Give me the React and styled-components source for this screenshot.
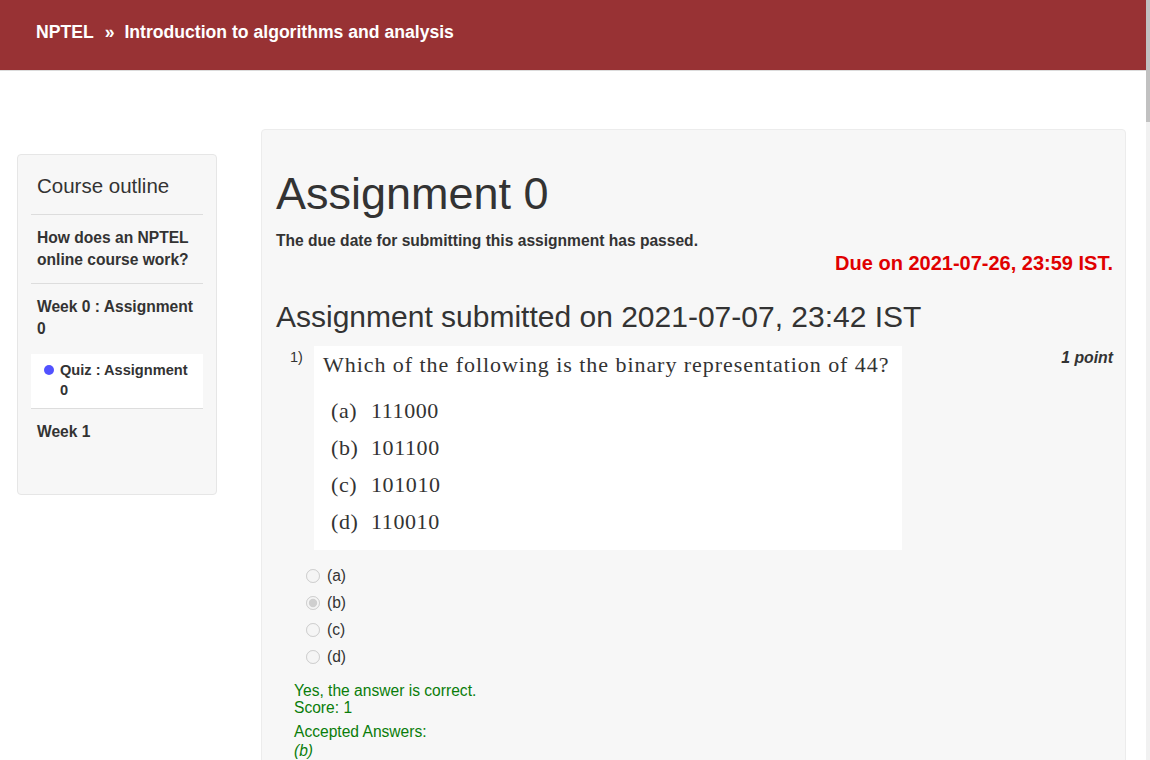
import React from "react";
import styled, { createGlobalStyle } from "styled-components";

const GlobalStyle = createGlobalStyle`
  body {
    margin: 0;
    font-family: "Liberation Sans", Arial, sans-serif;
    color: #333;
    background: #fff;
  }
`;

const outline = [
  { label: "How does an NPTEL online course work?" },
  { label: "Week 0 : Assignment 0", children: ["Quiz : Assignment 0"] },
  { label: "Week 1" },
];

const choices = ["(a)", "(b)", "(c)", "(d)"];
const imageOptions = [
  ["(a)", "111000"],
  ["(b)", "101100"],
  ["(c)", "101010"],
  ["(d)", "110010"],
];

const App = () => {
  return (
    <Page>
      <GlobalStyle />
      <ScrollTrack>
        <ScrollThumb />
      </ScrollTrack>
      <Header>
        <Crumb>NPTEL</Crumb>
        <Sep>»</Sep>
        <Crumb>Introduction to algorithms and analysis</Crumb>
      </Header>

      <Body>
        <Sidebar>
          <SideTitle>Course outline</SideTitle>
          {outline.map((unit) => (
            <Unit key={unit.label}>
              <UnitLabel>{unit.label}</UnitLabel>
              {unit.children &&
                unit.children.map((c) => (
                  <SubItem key={c}>
                    <Dot />
                    <span>{c}</span>
                  </SubItem>
                ))}
            </Unit>
          ))}
        </Sidebar>

        <Main>
          <Title>Assignment 0</Title>
          <Passed>The due date for submitting this assignment has passed.</Passed>
          <Due>Due on 2021-07-26, 23:59 IST.</Due>
          <Submitted>Assignment submitted on 2021-07-07, 23:42 IST</Submitted>

          <Question>
            <QNum>1)</QNum>
            <QImage>
              <QText>Which of the following is the binary representation of 44?</QText>
              <OptList>
                {imageOptions.map(([k, v]) => (
                  <Opt key={k}>
                    <OptKey>{k}</OptKey>
                    {v}
                  </Opt>
                ))}
              </OptList>
            </QImage>
            <Points>1 point</Points>
          </Question>

          <Choices>
            {choices.map((c) => (
              <Choice key={c}>
                <Radio type="radio" name="q1" disabled defaultChecked={c === "(b)"} />
                {c}
              </Choice>
            ))}
          </Choices>

          <Feedback>
            <div>Yes, the answer is correct.</div>
            <div>Score: 1</div>
            <Accepted>Accepted Answers:</Accepted>
            <em>(b)</em>
          </Feedback>
        </Main>
      </Body>
    </Page>
  );
};

const Page = styled.div`
  margin-right: 4px;
  height: 760px;
  overflow: hidden;
`;

const ScrollTrack = styled.div`
  position: fixed;
  top: 0;
  right: 0;
  width: 4px;
  height: 100vh;
  background: #f1f1f1;
`;

const ScrollThumb = styled.div`
  height: 122px;
  background: #c1c1c1;
`;

const Header = styled.header`
  height: 71px;
  background: #983234;
  border-bottom: 1px solid #dcdcdc;
  display: flex;
  align-items: center;
  padding: 0 36px 6px 36px;
  box-sizing: border-box;
  color: #fff;
  font-weight: bold;
  font-size: 17.6px;
`;

const Crumb = styled.span``;

const Sep = styled.span`
  margin: 0 10px 0 11px;
`;

const Body = styled.div`
  display: flex;
  align-items: flex-start;
  padding: 58px 20px 0 17px;
  gap: 44px;
`;

const Sidebar = styled.aside`
  width: 200px;
  flex: none;
  box-sizing: border-box;
  margin-top: 25px;
  padding: 19px 13px 30px 13px;
  background: #f7f7f7;
  border: 1px solid #e6e6e6;
  border-radius: 4px;
  min-height: 341px;
`;

const SideTitle = styled.div`
  font-size: 20.5px;
  line-height: 24px;
  padding: 0 6px 16px 6px;
  border-bottom: 1px solid #dddddd;
`;

const Unit = styled.div`
  padding-top: 12px;
  border-bottom: 1px solid #dddddd;
  &:last-child {
    border-bottom: none;
  }
`;

const UnitLabel = styled.div`
  font-size: 15.6px;
  font-weight: bold;
  line-height: 22px;
  padding: 0 6px 12px 6px;
`;

const SubItem = styled.div`
  display: flex;
  align-items: flex-start;
  background: #fff;
  font-size: 14.6px;
  font-weight: bold;
  line-height: 20px;
  padding: 6px 8px 8px 13px;
  margin-top: 2px;
`;

const Dot = styled.span`
  flex: none;
  width: 10px;
  height: 10px;
  border-radius: 50%;
  background: #5252ff;
  margin: 5px 6px 0 0;
`;

const Main = styled.main`
  flex: 1;
  height: 900px;
  background: #f7f7f7;
  border: 1px solid #ececec;
  border-radius: 4px;
  padding: 38px 12px 0 14px;
`;

const Title = styled.h1`
  margin: 0;
  font-size: 45px;
  font-weight: normal;
  line-height: 52px;
`;

const Passed = styled.div`
  font-size: 15.6px;
  font-weight: bold;
  line-height: 18px;
  margin-top: 12px;
`;

const Due = styled.div`
  text-align: right;
  color: #e00000;
  font-weight: bold;
  font-size: 20px;
  line-height: 23px;
  margin-top: 2px;
`;

const Submitted = styled.h2`
  margin: 24px 0 0 0;
  font-size: 30px;
  font-weight: normal;
  line-height: 36px;
`;

const Question = styled.div`
  display: flex;
  align-items: flex-start;
  margin-top: 11px;
`;

const QNum = styled.span`
  font-size: 14.5px;
  width: 38px;
  box-sizing: border-box;
  padding: 3px 0 0 14px;
`;

const QImage = styled.div`
  background: #fff;
  width: 588px;
  flex: none;
  box-sizing: border-box;
  padding: 4px 10px 10px 9px;
  font-family: "Liberation Serif", "Times New Roman", serif;
  color: #333;
`;

const QText = styled.div`
  font-size: 22px;
  letter-spacing: 0.95px;
  line-height: 30px;
`;

const OptList = styled.div`
  margin-top: 12px;
  padding-left: 8px;
`;

const Opt = styled.div`
  font-size: 22px;
  line-height: 37px;
  letter-spacing: 0.6px;
`;

const OptKey = styled.span`
  display: inline-block;
  width: 40px;
`;

const Points = styled.span`
  margin-left: auto;
  font-size: 15.8px;
  font-weight: bold;
  font-style: italic;
  padding-top: 3px;
`;

const Choices = styled.div`
  margin-top: 12px;
  padding-left: 16px;
`;

const Choice = styled.label`
  display: flex;
  align-items: center;
  font-size: 15.6px;
  line-height: 27px;
  height: 27px;
`;

const Radio = styled.input`
  margin: 0 7px 0 14px;
  width: 14px;
  height: 14px;
`;

const Feedback = styled.div`
  color: #0a7d0a;
  font-size: 15.6px;
  line-height: 17px;
  padding-left: 18px;
  margin-top: 12px;
`;

const Accepted = styled.div`
  margin-top: 7px;
  line-height: 17px;
  & + em {
    display: block;
    line-height: 22px;
  }
`;

export default App;
